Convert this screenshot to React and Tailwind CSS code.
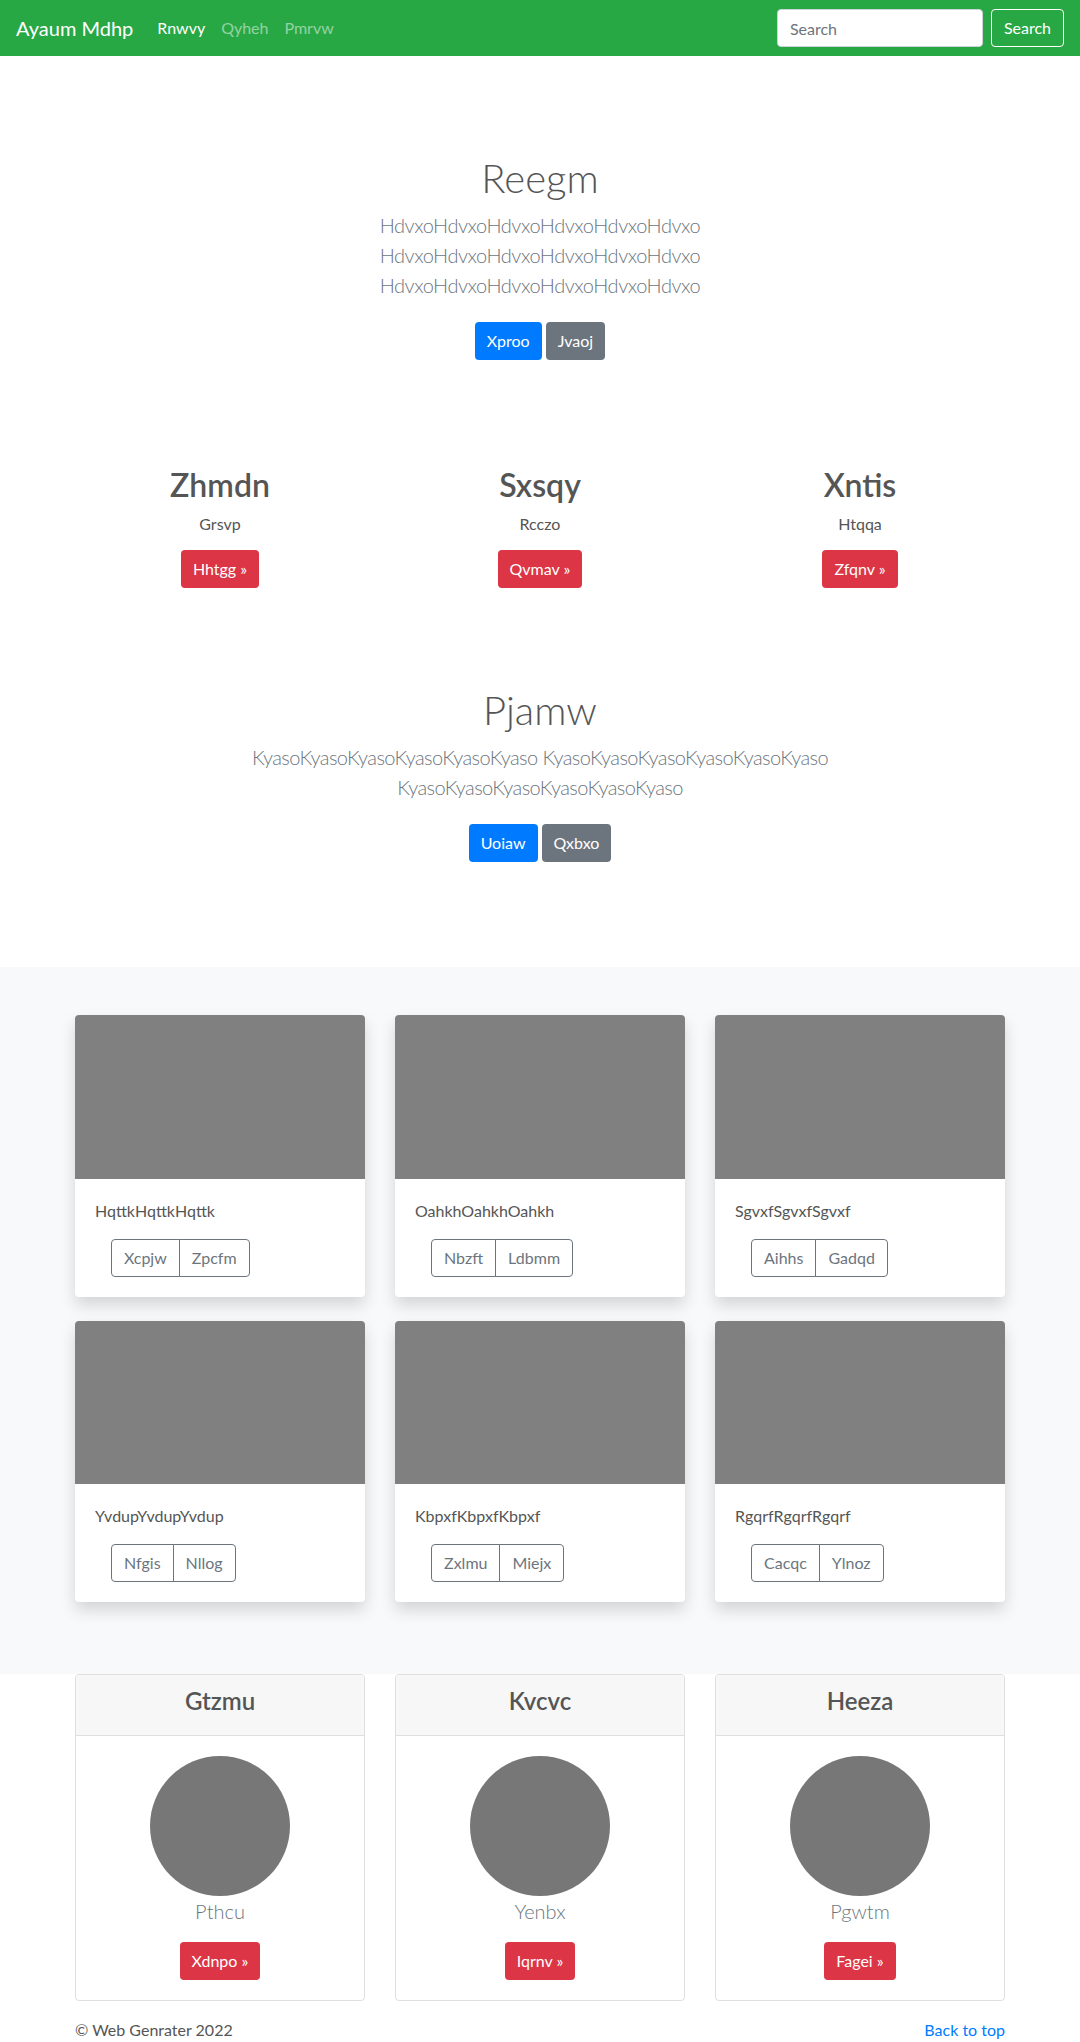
import React from "react";

const features = [
  { title: "Zhmdn", text: "Grsvp", btn: "Hhtgg »" },
  { title: "Sxsqy", text: "Rcczo", btn: "Qvmav »" },
  { title: "Xntis", text: "Htqqa", btn: "Zfqnv »" },
];

const albums = [
  { text: "HqttkHqttkHqttk", a: "Xcpjw", b: "Zpcfm" },
  { text: "OahkhOahkhOahkh", a: "Nbzft", b: "Ldbmm" },
  { text: "SgvxfSgvxfSgvxf", a: "Aihhs", b: "Gadqd" },
  { text: "YvdupYvdupYvdup", a: "Nfgis", b: "Nllog" },
  { text: "KbpxfKbpxfKbpxf", a: "Zxlmu", b: "Miejx" },
  { text: "RgqrfRgqrfRgqrf", a: "Cacqc", b: "Ylnoz" },
];

const team = [
  { title: "Gtzmu", name: "Pthcu", btn: "Xdnpo »" },
  { title: "Kvcvc", name: "Yenbx", btn: "Iqrnv »" },
  { title: "Heeza", name: "Pgwtm", btn: "Fagei »" },
];

const App = () => {
  return (
    <div className="font-['Lato',sans-serif] text-base text-[#555] bg-white">
      {/* Navbar */}
      <nav className="h-14 bg-[#28a745] px-4 flex items-center">
        <span className="text-xl text-white mr-4">Ayaum Mdhp</span>
        <div className="flex items-center">
          <a className="px-2 text-white">Rnwvy</a>
          <a className="px-2 text-white/50">Qyheh</a>
          <a className="px-2 text-white/50">Pmrvw</a>
        </div>
        <div className="ml-auto flex items-center">
          <input
            type="text"
            placeholder="Search"
            className="w-[206px] h-[38px] px-3 bg-white border border-[#ced4da] rounded text-base text-[#495057] placeholder:text-[#6c757d] outline-none"
          />
          <button className="ml-2 h-[38px] px-3 border border-white rounded text-white">
            Search
          </button>
        </div>
      </nav>

      {/* Hero */}
      <section className="pt-[98px] text-center">
        <div className="max-w-[480px] mx-auto">
          <h1 className="text-[40px] font-light leading-[1.2] mb-2">Reegm</h1>
          <p className="text-xl font-light leading-[1.5] tracking-[-0.45px] text-[#6c757d] mb-[22px]">
            HdvxoHdvxoHdvxoHdvxoHdvxoHdvxo HdvxoHdvxoHdvxoHdvxoHdvxoHdvxo
            HdvxoHdvxoHdvxoHdvxoHdvxoHdvxo
          </p>
          <div className="flex justify-center gap-1">
            <button className="h-[38px] px-3 rounded bg-[#007bff] text-white">Xproo</button>
            <button className="h-[38px] px-3 rounded bg-[#6c757d] text-white">Jvaoj</button>
          </div>
        </div>
      </section>

      {/* Features */}
      <section className="mt-[106px] w-[960px] mx-auto grid grid-cols-3 text-center">
        {features.map((f) => (
          <div key={f.title} className="px-[15px]">
            <h2 className="text-[32px] font-semibold leading-[1.2] mb-2">{f.title}</h2>
            <p className="leading-6 mb-[14px]">{f.text}</p>
            <button className="h-[38px] px-3 rounded bg-[#dc3545] text-white">{f.btn}</button>
          </div>
        ))}
      </section>

      {/* Second hero */}
      <section className="mt-[98px] text-center">
        <div className="max-w-[720px] mx-auto">
          <h1 className="text-[40px] font-light leading-[1.2] mb-2">Pjamw</h1>
          <p className="text-xl font-light leading-[1.5] tracking-[-0.6px] text-[#6c757d] mb-[22px]">
            KyasoKyasoKyasoKyasoKyasoKyaso KyasoKyasoKyasoKyasoKyasoKyaso
            KyasoKyasoKyasoKyasoKyasoKyaso
          </p>
          <div className="flex justify-center gap-1">
            <button className="h-[38px] px-3 rounded bg-[#007bff] text-white">Uoiaw</button>
            <button className="h-[38px] px-3 rounded bg-[#6c757d] text-white">Qxbxo</button>
          </div>
        </div>
      </section>

      {/* Album */}
      <section className="mt-[105px] bg-[#f8f9fa] pt-12 pb-12">
        <div className="w-[960px] mx-auto grid grid-cols-3">
          {albums.map((c) => (
            <div key={c.text} className="px-[15px]">
              <div className="mb-6 bg-white rounded shadow-[0_8px_16px_rgba(0,0,0,0.15)] overflow-hidden">
                <div className="aspect-video bg-[#808080]"></div>
                <div className="p-5">
                  <p className="leading-6 mb-4">{c.text}</p>
                  <div className="ml-4 inline-flex">
                    <button className="h-[38px] px-3 border border-[#6c757d] rounded-l text-[#6c757d]">
                      {c.a}
                    </button>
                    <button className="-ml-px h-[38px] px-3 border border-[#6c757d] rounded-r text-[#6c757d]">
                      {c.b}
                    </button>
                  </div>
                </div>
              </div>
            </div>
          ))}
        </div>
      </section>

      {/* Team */}
      <section className="w-[960px] mx-auto grid grid-cols-3 text-center">
        {team.map((t) => (
          <div key={t.title} className="px-[15px]">
            <div className="border border-[#dfdfdf] rounded overflow-hidden">
              <div className="bg-[#f7f7f7] border-b border-[#dfdfdf] px-5 py-3">
                <h4 className="text-2xl font-semibold leading-[1.2] mb-2">{t.title}</h4>
              </div>
              <div className="p-5">
                <div className="w-[140px] h-[140px] rounded-full bg-[#777] mx-auto"></div>
                <p className="text-xl font-light leading-[30px] text-[#6c757d] mb-4">{t.name}</p>
                <button className="h-[38px] px-3 rounded bg-[#dc3545] text-white">{t.btn}</button>
              </div>
            </div>
          </div>
        ))}
      </section>

      {/* Footer */}
      <footer className="w-[960px] mx-auto px-[15px] pt-[17px] pb-2 flex justify-between leading-6">
        <p>© Web Genrater 2022</p>
        <a className="text-[#007bff]">Back to top</a>
      </footer>
    </div>
  );
};

export default App;
